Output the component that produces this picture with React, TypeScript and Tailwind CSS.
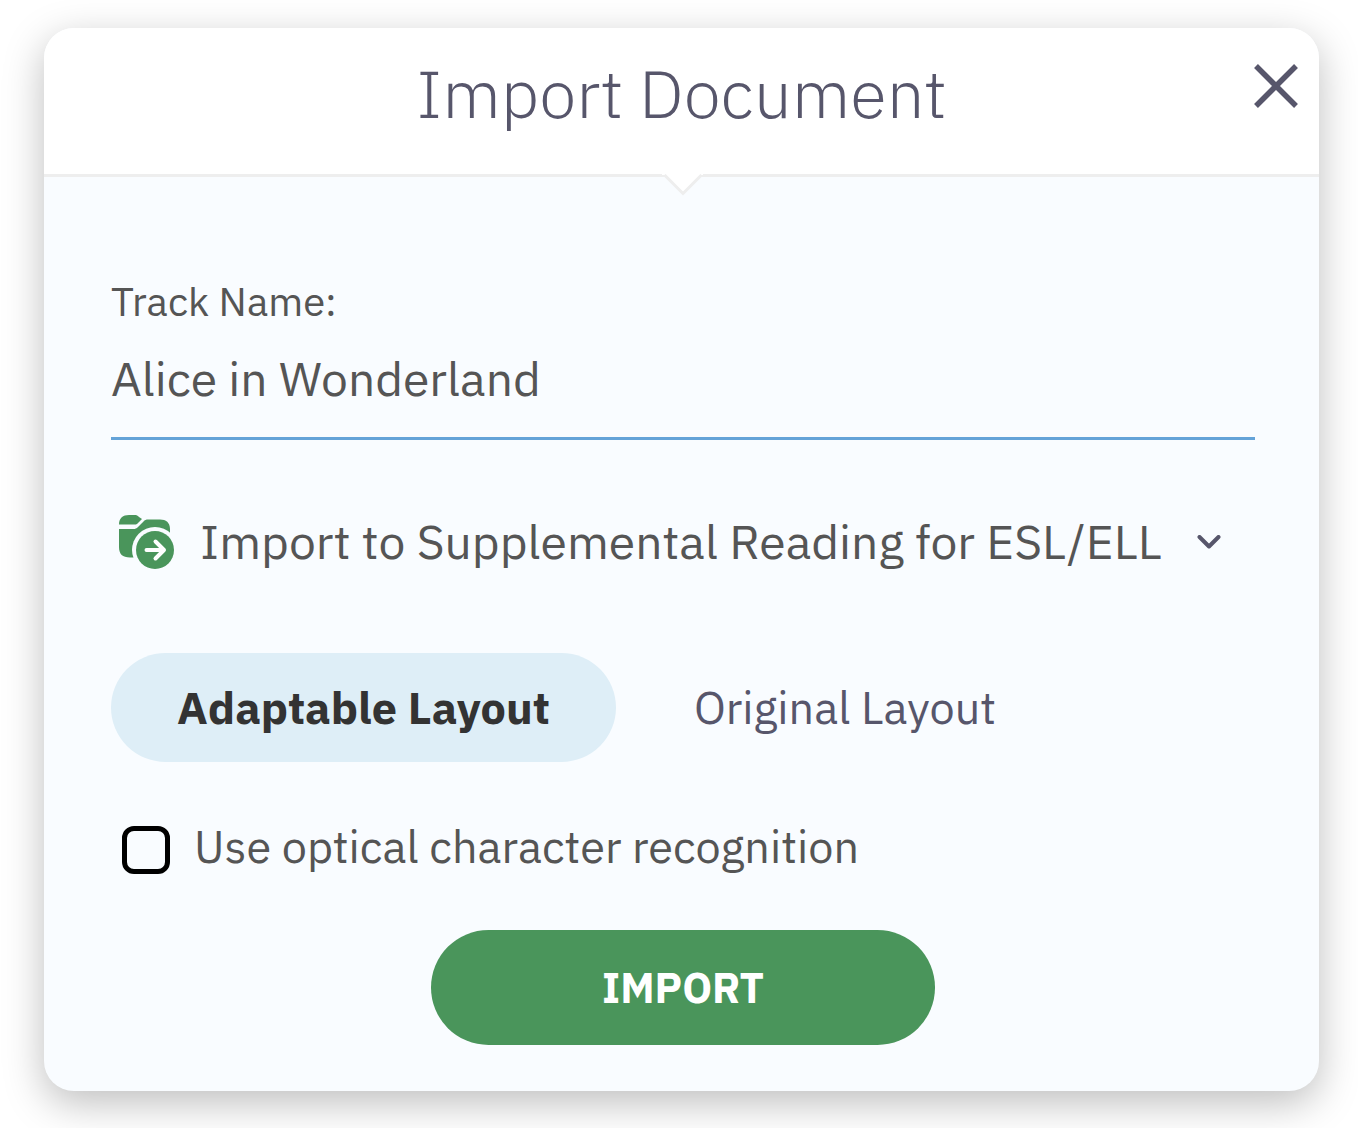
import { useState } from "react";

const folders = ["Import to Supplemental Reading for ESL/ELL"];

const layouts = ["Adaptable Layout", "Original Layout"];

function FolderArrowIcon() {
  return (
    <svg viewBox="0 0 56 56" className="h-14 w-14 shrink-0" aria-hidden="true">
      <path d="M0 11.500C0 5 4 2 10 2h6c1.500 0 2.500.500 4 2l3 2-4.500 4.500c-.800.800-1.200 1-2.500 1Z" fill="#4a955b" />
      <path
        d="M0 16h14c2.500 0 3.500-.500 5-2l6-6c1-1 2-1.500 4-1.500h12c6 0 10 3 10 9.500V32H30L20 44.500h-9C3.500 44.500 0 41 0 34Z"
        fill="#4a955b"
      />
      <circle cx="36" cy="37" r="23" fill="#f9fcff" />
      <circle cx="36" cy="37" r="19" fill="#4a955b" />
      <path
        d="M27.500 37H45M36.500 28.500l8.500 8.500-8.500 8.500"
        fill="none"
        stroke="#fff"
        strokeWidth="4"
        strokeLinecap="round"
        strokeLinejoin="round"
      />
    </svg>
  );
}

export default function App() {
  const [trackName, setTrackName] = useState("Alice in Wonderland");
  const [layout, setLayout] = useState(layouts[0]);
  const [useOcr, setUseOcr] = useState(false);

  return (
    <main className="min-h-screen bg-white pt-7 pr-[39px] pb-9 pl-11 font-['IBM_Plex_Sans',Roboto,sans-serif] text-[#555]">
      <div
        role="dialog"
        aria-labelledby="import-title"
        className="overflow-hidden rounded-[30px] bg-[#f9fcff] shadow-[0_12px_40px_rgba(0,0,0,0.26)]"
      >
        <header className="relative border-b-3 border-[#eee] bg-white px-20 pt-5 pb-9">
          <h1 id="import-title" className="text-center text-[67px] leading-[90px] font-light text-[#57566b]">
            Import Document
          </h1>
          <button type="button" aria-label="Close" className="absolute top-9 right-[21px] cursor-pointer">
            <svg viewBox="0 0 44 44" className="h-11 w-11" stroke="#57566b" strokeWidth="5.500">
              <path d="M2 2l40 40M42 2L2 42" />
            </svg>
          </button>
          <svg viewBox="0 0 42 22" className="absolute -bottom-[22px] left-1/2 h-[22px] w-[42px] -translate-x-1/2" aria-hidden="true">
            <path d="M1 0h42v1h-2L22 20 3 1H1Z" fill="#fff" />
            <path d="M3.500 1l18.500 18.500L40.500 1" fill="none" stroke="#eee" strokeWidth="3" />
          </svg>
        </header>

        <form className="flex flex-col pt-[94px] pr-16 pb-[46px] pl-[67px]" onSubmit={(e) => e.preventDefault()}>
          <label htmlFor="track-name" className="text-[40px] leading-[60px]">
            Track Name:
          </label>
          <input
            id="track-name"
            type="text"
            value={trackName}
            onChange={(e) => setTrackName(e.target.value)}
            className="h-[109px] w-full border-b-3 border-[#64a3d8] bg-transparent pb-3 text-[48px] outline-none"
          />

          <div className="mt-16 flex h-[74px] items-center gap-[25px] pl-2">
            <FolderArrowIcon />
            <div className="relative min-w-0 flex-1">
              <select
                aria-label="Destination folder"
                className="block h-[74px] w-full appearance-none bg-transparent pr-20 text-[48px] outline-none"
              >
                {folders.map((folder) => (
                  <option key={folder}>{folder}</option>
                ))}
              </select>
              <svg
                viewBox="0 0 24 14"
                className="pointer-events-none absolute top-[31px] right-[34px] h-[14px] w-6"
                fill="none"
                stroke="#57566b"
                strokeWidth="4"
                strokeLinecap="round"
                strokeLinejoin="round"
                aria-hidden="true"
              >
                <path d="M2.500 2l9.500 9.500L21.500 2" />
              </svg>
            </div>
          </div>

          <div className="mt-[75px] flex gap-3">
            {layouts.map((name) => (
              <button
                key={name}
                type="button"
                aria-pressed={layout === name}
                onClick={() => setLayout(name)}
                className={`h-[109px] cursor-pointer rounded-full px-[66px] text-[45px] ${
                  layout === name ? "bg-[#deeef7] font-bold text-[#333]" : "text-[#57566b]"
                }`}
              >
                {name}
              </button>
            ))}
          </div>

          <div className="mt-[58px] flex h-[60px] items-center gap-6 pl-[11px]">
            <input
              id="use-ocr"
              type="checkbox"
              checked={useOcr}
              onChange={(e) => setUseOcr(e.target.checked)}
              className="h-12 w-12 shrink-0 appearance-none rounded-xl border-5 border-black bg-transparent checked:bg-[#4a955b]"
            />
            <label htmlFor="use-ocr" className="pb-2 text-[45px] leading-[60px]">
              Use optical character recognition
            </label>
          </div>

          <button
            type="submit"
            className="mt-[50px] h-[115px] w-full max-w-[504px] cursor-pointer self-center rounded-full bg-[#4a955b] text-[42px] font-bold text-white"
          >
            IMPORT
          </button>
        </form>
      </div>
    </main>
  );
}
